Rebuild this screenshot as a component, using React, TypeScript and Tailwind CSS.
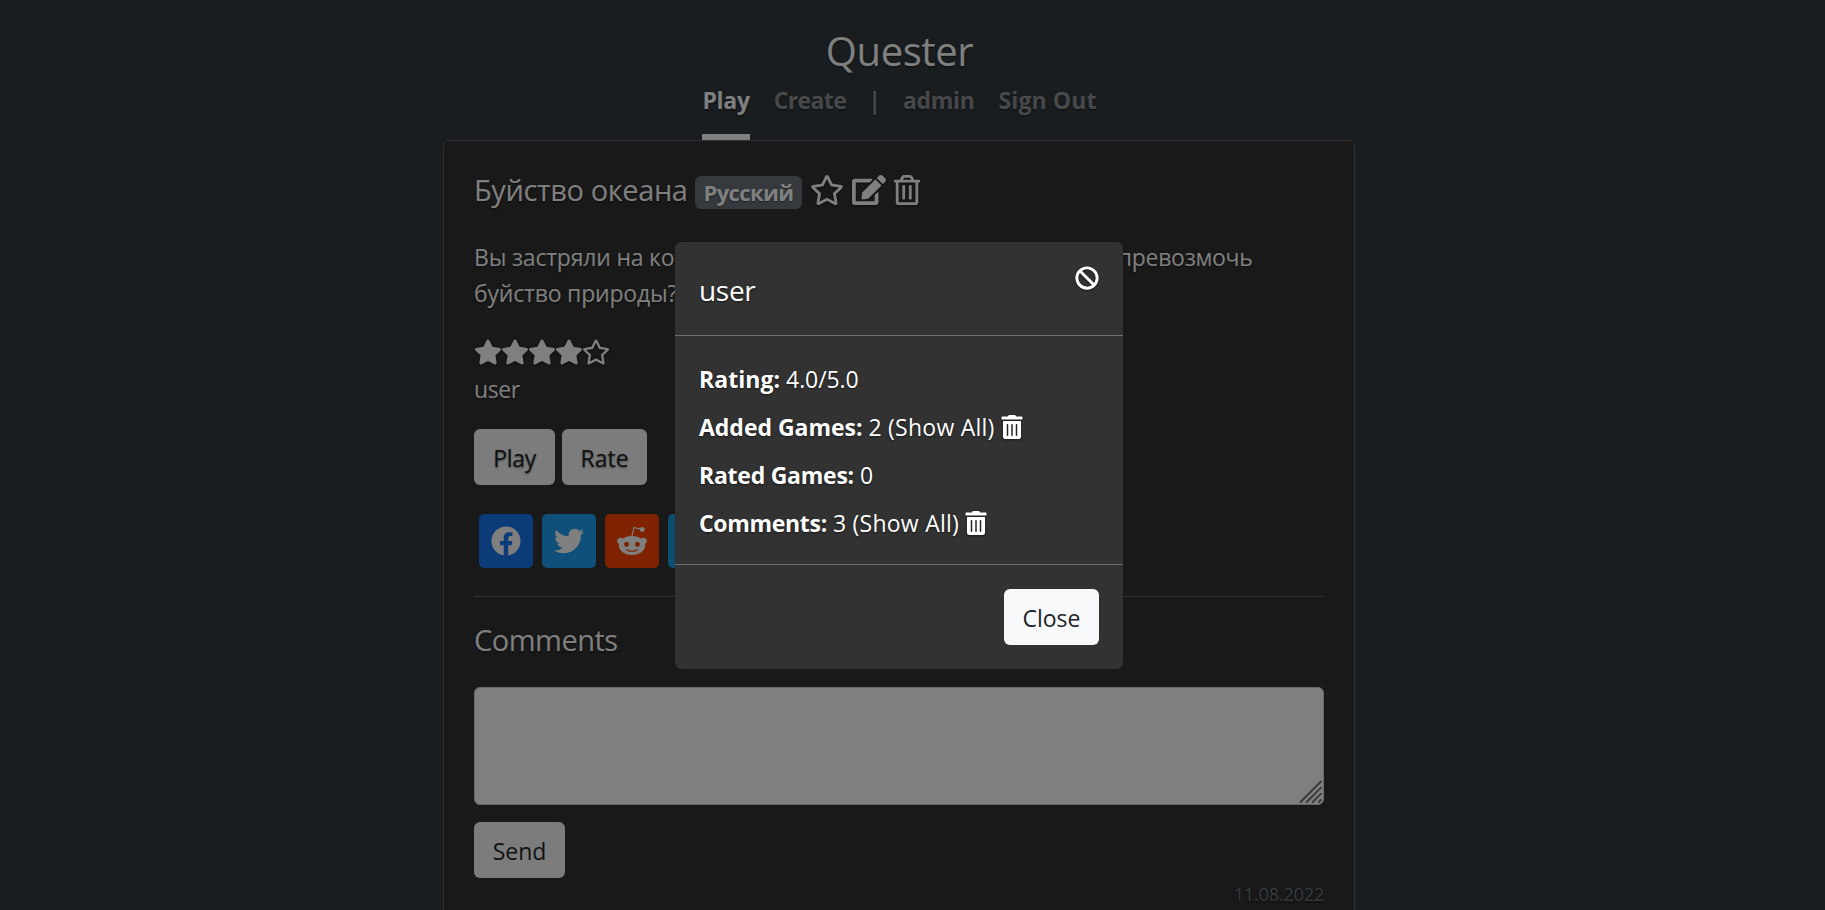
import type { ReactNode } from "react";
import {
  FaBan,
  FaEdit,
  FaFacebook,
  FaRedditAlien,
  FaRegStar,
  FaRegTrashAlt,
  FaStar,
  FaTelegramPlane,
  FaTrashAlt,
  FaTwitter,
} from "react-icons/fa";

const iconShadow = "shrink-0 drop-shadow-[0_1px_1px_rgba(0,0,0,0.5)]";

function NavLink({ children, active = false, className = "" }: { children: ReactNode; active?: boolean; className?: string }) {
  return (
    <a
      className={`h-[60px] border-b-6 ${active ? "border-white text-white" : "border-transparent text-white/50"} ${className}`}
    >
      {children}
    </a>
  );
}

function Page() {
  return (
    <div className="flex h-[910px] flex-col items-center overflow-hidden bg-[#323a3f] pr-[27px] text-white">
      <header className="flex h-[140px] w-[912px] shrink-0 flex-col items-center pt-[23px] pl-px">
        <h1 className="h-[57px] text-[40px] leading-[56px] tracking-[-0.4px]">Quester</h1>
        <nav className="flex gap-6 text-[23px] leading-[40px] font-bold">
          <NavLink active className="tracking-[-0.3px]">Play</NavLink>
          <NavLink className="tracking-[-0.6px]">Create</NavLink>
          <span className="-mx-[2px] text-white/50">|</span>
          <NavLink className="tracking-[-0.3px]">admin</NavLink>
          <NavLink className="tracking-[0.1px]">Sign Out</NavLink>
        </nav>
      </header>
      <main className="h-[900px] w-[912px] shrink-0 rounded-[6px] border border-[#626262] bg-[#323232] px-[30px] pt-[30px]">
        <div className="flex h-[38px] items-center">
          <h2 className="w-[213px] text-[29px] whitespace-nowrap tracking-[-0.4px]">Буйство океана</h2>
          <span className="mt-[4px] ml-[8px] flex h-[33px] w-[107px] items-center justify-center rounded-[6px] bg-[#6c757d] text-[22px] font-bold tracking-[-0.6px]">
            Русский
          </span>
          <FaRegStar size={34} className={`ml-[8px] ${iconShadow}`} />
          <FaEdit size={34} className={`ml-[8px] ${iconShadow}`} />
          <FaRegTrashAlt size={30} className={`-mt-px ml-[6px] ${iconShadow}`} />
        </div>
        <p className="mt-[30px] h-[71px] text-[23px] leading-[36px] tracking-[-0.2px] whitespace-nowrap">
          Вы застряли на корабле посреди океана. Сможете ли вы{" "}
          <span className="ml-[12px] tracking-[-0.3px]">превозмочь</span>
          <br />
          буйство природы?
        </p>
        <div className="mt-[28px] flex h-[28px] items-center">
          <FaStar size={28} className={`-mr-px ${iconShadow}`} />
          <FaStar size={28} className={`-mr-px ${iconShadow}`} />
          <FaStar size={28} className={`-mr-px ${iconShadow}`} />
          <FaStar size={28} className={`-mr-px ${iconShadow}`} />
          <FaRegStar size={28} className={iconShadow} />
        </div>
        <div className="mt-[6px] h-[36px] text-[23px] leading-[34px] tracking-[-0.4px]">user</div>
        <div className="mt-[21px] flex gap-[7px] text-[23px] text-[#212529]">
          <button className="h-[56px] w-[81px] rounded-[6px] bg-[#f8f9fa] pt-[2px] tracking-[-0.3px] text-shadow-[0_1px_2px_rgba(0,0,0,0.5)]">
            Play
          </button>
          <button className="h-[56px] w-[85px] rounded-[6px] bg-[#f8f9fa] pt-[2px] text-shadow-[0_1px_2px_rgba(0,0,0,0.5)]">
            Rate
          </button>
        </div>
        <div className="mt-[29px] ml-[5px] flex gap-[9px]">
          <div className="flex size-[54px] items-center justify-center rounded-[5px] bg-[#1877f2]">
            <FaFacebook size={30} />
          </div>
          <div className="flex size-[54px] items-center justify-center rounded-[5px] bg-[#1da1f2]">
            <FaTwitter size={30} />
          </div>
          <div className="flex size-[54px] items-center justify-center rounded-[5px] bg-[#ff4500]">
            <FaRedditAlien size={32} />
          </div>
          <div className="flex size-[54px] items-center justify-center rounded-[5px] bg-[#179cde]">
            <FaTelegramPlane size={30} />
          </div>
        </div>
        <hr className="mt-[28px] border-[#656565]" />
        <h3 className="mt-[23px] h-[42px] text-[29px] leading-[40px] tracking-[-0.5px]">Comments</h3>
        <div className="relative mt-[25px]">
          <textarea
            readOnly
            className="block h-[118px] w-full resize-none rounded-[6px] border border-[#ced4da] bg-white"
          />
          <svg
            className="absolute right-px bottom-px"
            width="24"
            height="24"
            viewBox="0 0 24 24"
            stroke="#707070"
            strokeWidth="1.8"
            strokeLinecap="round"
          >
            <path d="M1.5 22 22 1.5M7.7 22 22 7.7M13.7 22 22 13.7M19.8 22 22 19.8" />
          </svg>
        </div>
        <button className="mt-[17px] block h-[56px] w-[91px] rounded-[6px] bg-[#f8f9fa] pt-[2px] text-[23px] tracking-[-0.1px] text-[#212529] text-shadow-none">
          Send
        </button>
        <div className="mt-[2px] text-right text-[18.5px] leading-[28px] tracking-[-0.4px] text-[#6c757d]">11.08.2022</div>
      </main>
    </div>
  );
}

function Stat({ label, value, removable = false, className }: { label: string; value: string; removable?: boolean; className: string }) {
  return (
    <div className="flex h-[36px] items-center">
      <b className={`-mt-[2px] ${className}`}>{label}</b>
      <span className={`-mt-[2px] ml-[6px] ${removable ? "tracking-[0.25px]" : "tracking-[-0.1px]"}`}>{value}</span>
      {removable && <FaTrashAlt size={24} className={`-mt-[3px] ml-[5px] ${iconShadow}`} />}
    </div>
  );
}

function UserDialog() {
  return (
    <div className="absolute inset-0 flex items-start justify-center bg-black/50 pt-[242px] pr-[27px]">
      <section className="h-[427px] w-[448px] rounded-[6px] bg-[#323232] text-[23px] text-white shadow-[0_0_1px_rgba(0,0,0,0.6)]">
        <div className="flex h-[94px] justify-between border-b border-[#707070] px-6 pt-6">
          <h2 className="text-[28px] leading-[48px] tracking-[-0.3px]">user</h2>
          <FaBan size={24} className={iconShadow} />
        </div>
        <div className="flex h-[229px] flex-col gap-3 border-b border-[#707070] px-6 pt-[26px]">
          <Stat label="Rating:" value="4.0/5.0" className="tracking-[0.05px]" />
          <Stat label="Added Games:" value="2 (Show All)" removable className="tracking-[-0.03px]" />
          <Stat label="Rated Games:" value="0" className="tracking-[-0.25px]" />
          <Stat label="Comments:" value="3 (Show All)" removable className="tracking-[-0.32px]" />
        </div>
        <div className="flex justify-end px-6 pt-6">
          <button className="h-[56px] w-[95px] rounded-[6px] bg-[#f8f9fa] pt-[2px] text-[#212529] text-shadow-none">
            Close
          </button>
        </div>
      </section>
    </div>
  );
}

export default function App() {
  return (
    <div className="relative h-[910px] w-full overflow-hidden font-['Open_Sans','Noto_Sans',sans-serif] text-shadow-[0_1px_2px_rgba(0,0,0,0.5)]">
      <Page />
      <UserDialog />
    </div>
  );
}
